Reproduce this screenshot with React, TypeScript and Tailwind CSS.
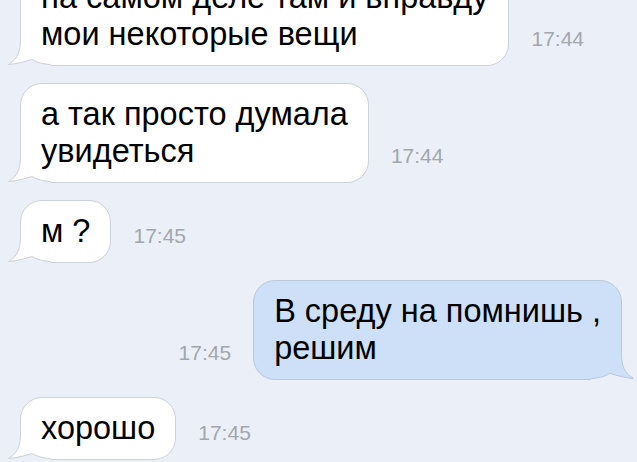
import type { ReactNode } from "react"

const BG = "#ebf0f8"

type Msg = {
  id: number
  out?: boolean
  lines: string[]
  time: string
}

const messages: Msg[] = [
  { id: 1, lines: ["на самом деле там и вправду", "мои некоторые вещи"], time: "17:44" },
  { id: 2, lines: ["а так просто думала", "увидеться"], time: "17:44" },
  { id: 3, lines: ["м ?"], time: "17:45" },
  { id: 4, out: true, lines: ["В среду на помнишь ,", "решим"], time: "17:45" },
  { id: 5, lines: ["хорошо"], time: "17:45" },
]

// the little iOS-style tail on the bottom corner of a bubble
function Tail({ fill, stroke, out }: { fill: string; stroke: string; out?: boolean }) {
  return (
    <svg
      width="44"
      height="27"
      viewBox="0 0 44 27"
      className={`pointer-events-none absolute bottom-[-1px] ${
        out ? "right-[-14px] -scale-x-100" : "left-[-14px]"
      }`}
    >
      <path
        d="M1.5 25.5 C10 25 18 22.5 25 20.5 C29 22.5 33 25 44 25.5 L44 27 L0 27 Z"
        fill={BG}
      />
      <path
        d="M13.5 0 C13.5 12 11 20 1.5 25.5 C10 25 18 22.5 25 20.5 L25 0 Z"
        fill={fill}
      />
      <path
        d="M13.5 0 C13.5 12 11 20 1.5 25.5 C10 25 18 22.5 25 20.5 C29 22.5 33 25 44 25.5"
        fill="none"
        stroke={stroke}
        strokeWidth="1"
      />
    </svg>
  )
}

function Bubble({ out, children }: { out?: boolean; children: ReactNode }) {
  return (
    <div
      className={`relative rounded-[22px] border px-[20px] py-[12px] text-[32.5px] leading-[37px] text-black ${
        out
          ? "rounded-br-none border-[#b9c9dd] bg-[#cee0f7]"
          : "rounded-bl-none border-[#cdd1d8] bg-white"
      }`}
    >
      {children}
      {out ? (
        <Tail out fill="#cee0f7" stroke="#b9c9dd" />
      ) : (
        <Tail fill="#ffffff" stroke="#cdd1d8" />
      )}
    </div>
  )
}

function Time({ value }: { value: string }) {
  return (
    <span className="mb-[17px] text-[21px] leading-none text-[#a2a6ad]">{value}</span>
  )
}

export default function App() {
  return (
    <div
      className="h-[462px] w-[637px] overflow-hidden bg-[#ebf0f8]"
      style={{ fontFamily: '"Liberation Sans", Arial, sans-serif' }}
    >
      <div className="-mt-[34px] flex flex-col gap-[17px]">
        {messages.map((m) => (
          <div
            key={m.id}
            className={`flex items-end gap-[22px] ${
              m.out ? "justify-end pr-[15px]" : "justify-start pl-[20px]"
            }`}
          >
            {m.out && <Time value={m.time} />}
            <Bubble out={m.out}>
              {m.lines.map((l, i) => (
                <div key={i} className="whitespace-nowrap">
                  {l}
                </div>
              ))}
            </Bubble>
            {!m.out && <Time value={m.time} />}
          </div>
        ))}
      </div>
    </div>
  )
}
